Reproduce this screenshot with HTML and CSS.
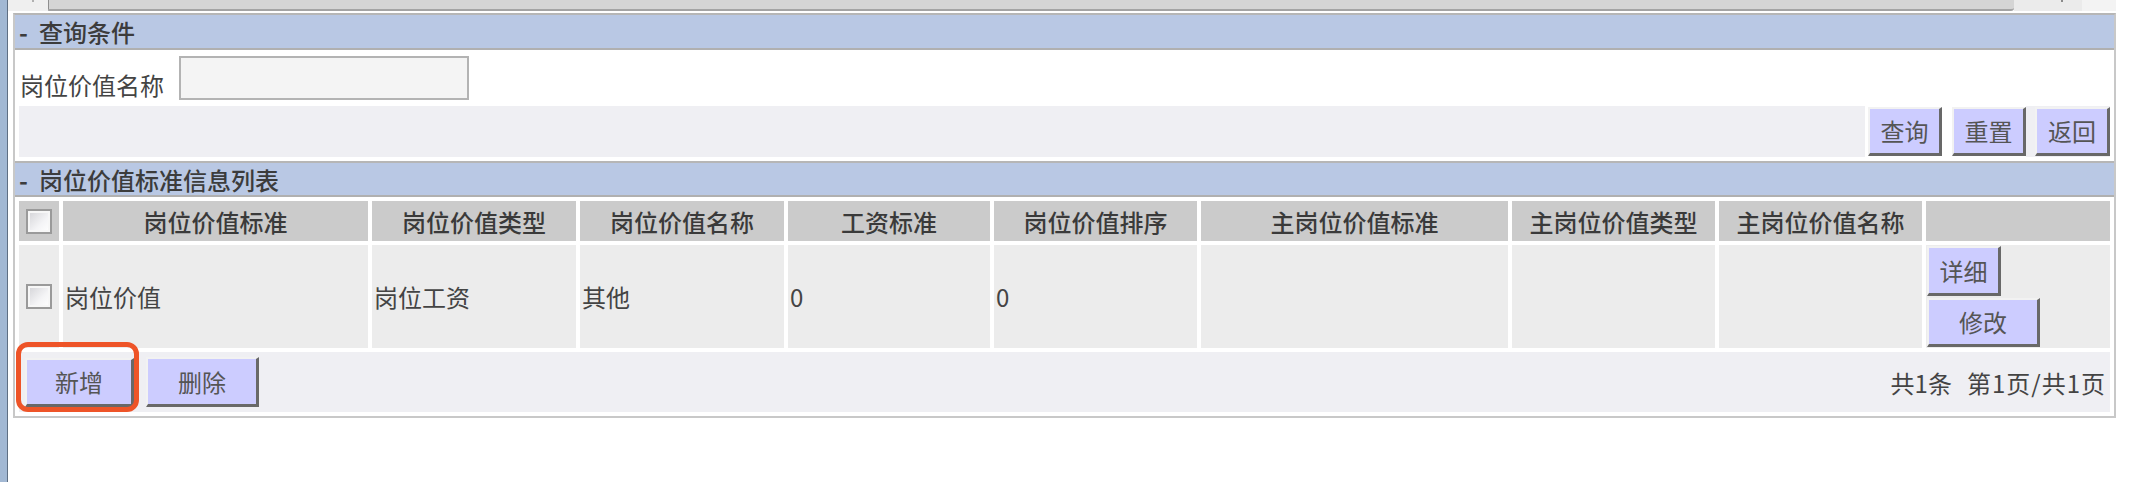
FILE: index.html
```html
<!DOCTYPE html>
<html lang="zh-CN">
<head>
<meta charset="utf-8">
<title>岗位价值标准信息列表</title>
<link rel="stylesheet" href="styles.css">
</head>
<body>
<div class="frame">
  <div class="edge"></div>
  <div class="main">
    <div class="topbar">
      <div class="tb-left"><span class="tb-mark left"></span></div>
      <div class="tb-bar"></div>
      <div class="tb-tail"><span class="tb-mark"></span></div>
      <div class="tb-end"></div>
    </div>
    <div class="panel">
      <div class="panel-head"><span class="dash">-</span>查询条件</div>
      <div class="search-row">
        <label class="search-label">岗位价值名称</label>
        <input class="search-input" type="text">
      </div>
      <div class="action-row">
        <div class="action-fill"></div>
        <button class="btn btn-query">查询</button>
        <button class="btn btn-reset">重置</button>
        <div class="btn-cell"><button class="btn btn-back">返回</button></div>
      </div>
      <div class="panel-head second"><span class="dash">-</span>岗位价值标准信息列表</div>
      <div class="grid">
        <div class="th"><span class="check"></span></div>
        <div class="th">岗位价值标准</div>
        <div class="th">岗位价值类型</div>
        <div class="th">岗位价值名称</div>
        <div class="th">工资标准</div>
        <div class="th">岗位价值排序</div>
        <div class="th">主岗位价值标准</div>
        <div class="th">主岗位价值类型</div>
        <div class="th">主岗位价值名称</div>
        <div class="th"></div>

        <div class="td td-check"><span class="check"></span></div>
        <div class="td">岗位价值</div>
        <div class="td">岗位工资</div>
        <div class="td">其他</div>
        <div class="td">0</div>
        <div class="td">0</div>
        <div class="td"></div>
        <div class="td"></div>
        <div class="td"></div>
        <div class="td td-actions">
          <button class="btn btn-detail">详细</button>
          <button class="btn btn-edit">修改</button>
        </div>
      </div>
      <div class="footer">
        <span class="highlight"><button class="btn btn-add">新增</button></span>
        <button class="btn btn-del">删除</button>
        <span class="pager"><span class="pager-total">共1条</span><span class="pager-page">第1页/共1页</span></span>
      </div>
    </div>
  </div>
</div>
</body>
</html>
```

FILE: styles.css
```css
html, body {
  margin: 0;
  padding: 0;
  background: #ffffff;
}

body {
  font-family: "Noto Sans CJK SC", "Liberation Sans", sans-serif;
  font-size: 24px;
  color: #444444;
}

.frame {
  display: flex;
  min-height: 100vh;
}

.edge {
  width: 7px;
  background: #a2b8d3;
  border-right: 1px solid #5f6f83;
  flex: none;
}

.main {
  flex: 1;
}

/* top strip */
.topbar {
  display: flex;
  height: 11px;
}

.tb-left {
  width: 40px;
  background: #efefef;
  display: flex;
}

.tb-bar {
  width: 1965px;
  height: 9px;
  background: #d5d5d5;
  border-left: 1px solid #8e8e8e;
  border-bottom: 2px solid #a4a4a4;
  border-bottom-right-radius: 3px;
  box-sizing: content-box;
}

.tb-tail {
  width: 68px;
  background: #ebebeb;
  display: flex;
  justify-content: flex-start;
}

.tb-mark {
  width: 2px;
  height: 2px;
  margin-left: 47px;
  background: #8a8a8a;
}

.tb-mark.left {
  margin-left: 24px;
  background: #b0b0b0;
}

.tb-end {
  width: 34px;
  background: #f3f3f3;
}

/* panel */
.panel {
  margin: 2px 0 0 5px;
  width: 2103px;
  box-sizing: border-box;
  border: 2px solid #c8c8c8;
  border-top-color: #b6b6b6;
}

.panel-head {
  height: 33px;
  background: #b9c8e4;
  border-bottom: 2px solid #b0b0b0;
  display: flex;
  align-items: center;
  padding-left: 4px;
  font-weight: 500;
  color: #3c3c3c;
  line-height: 33px;
}

.panel-head.second {
  height: 32px;
  border-top: 2px solid #b6b6b6;
}

.dash {
  width: 20px;
  flex: none;
  font-weight: bold;
}

.search-row {
  height: 56px;
  display: flex;
  align-items: center;
  padding-left: 5px;
}

.search-label {
  line-height: 24px;
  padding-top: 14px;
  width: 144px;
  white-space: nowrap;
}

.search-input {
  margin-left: 15px;
  width: 290px;
  height: 44px;
  box-sizing: border-box;
  background: #f4f4f4;
  border: 2px solid #b3b3b3;
  padding: 0;
}

.action-row {
  margin: 0 4px 4px;
  height: 51px;
  display: flex;
  align-items: flex-start;
}

.action-fill {
  flex: 1;
  height: 51px;
  background: #efeff3;
}

.btn-cell {
  height: 51px;
  padding-left: 9px;
  background: #efeff3;
  display: flex;
  align-items: flex-start;
}

/* buttons */
.btn {
  font-family: "Noto Sans CJK SC", "Liberation Sans", sans-serif;
  font-size: 24px;
  line-height: 24px;
  color: #555555;
  background: #ccccff;
  border-style: solid;
  border-width: 2px 3px 3px 2px;
  border-color: #f2f2f2 #686868 #686868 #f2f2f2;
  padding: 0;
  box-sizing: border-box;
  margin: 0;
}

.btn-query {
  margin: 1px 0 0 3px;
  width: 74px;
  height: 49px;
}

.btn-reset {
  margin: 1px 0 0 10px;
  width: 74px;
  height: 49px;
}

.btn-back {
  margin-top: 1px;
  width: 75px;
  height: 49px;
}

/* table */
.grid {
  margin: 4px 4px 0;
  display: grid;
  grid-template-columns: 40px 305px 204px 204px 202px 203px 307px 203px 203px 184px;
  grid-template-rows: 40px 103px;
  gap: 4px;
}

.th {
  background: #cbcbcb;
  display: flex;
  align-items: center;
  justify-content: center;
  font-weight: 500;
  color: #3a3a3a;
  white-space: nowrap;
}

.td {
  background: #ececec;
  display: flex;
  align-items: center;
  padding-left: 2px;
  white-space: nowrap;
}

.td-check {
  justify-content: center;
  padding-left: 0;
}

.check {
  display: block;
  width: 26px;
  height: 25px;
  box-sizing: border-box;
  border: 2px solid #9a9a9a;
  background: linear-gradient(135deg, #d2d2d6 0%, #f4f4f6 60%, #ffffff 100%);
  box-shadow: inset 0 0 0 2px #f7f7f7;
}

.td-actions {
  flex-direction: column;
  align-items: flex-start;
  justify-content: flex-start;
  padding: 1px 0 0 1px;
  gap: 2px;
}

.btn-detail {
  width: 74px;
  height: 50px;
}

.btn-edit {
  width: 113px;
  height: 49px;
}

/* footer */
.footer {
  margin: 4px;
  height: 60px;
  background: #efeff3;
  display: flex;
  align-items: center;
  padding: 0 4px 0 6px;
}

.highlight {
  position: relative;
  display: flex;
}

.highlight::after {
  content: "";
  position: absolute;
  left: -9px;
  right: -5px;
  top: -16px;
  bottom: -5px;
  border: 5px solid #ee5428;
  border-radius: 12px;
  pointer-events: none;
}

.btn-add {
  width: 109px;
  height: 49px;
}

.btn-del {
  margin-left: 12px;
  width: 113px;
  height: 50px;
}

.pager {
  margin-left: auto;
  color: #444444;
  white-space: nowrap;
  display: flex;
}

.pager-page {
  margin-left: 15px;
  letter-spacing: 1px;
}
```
